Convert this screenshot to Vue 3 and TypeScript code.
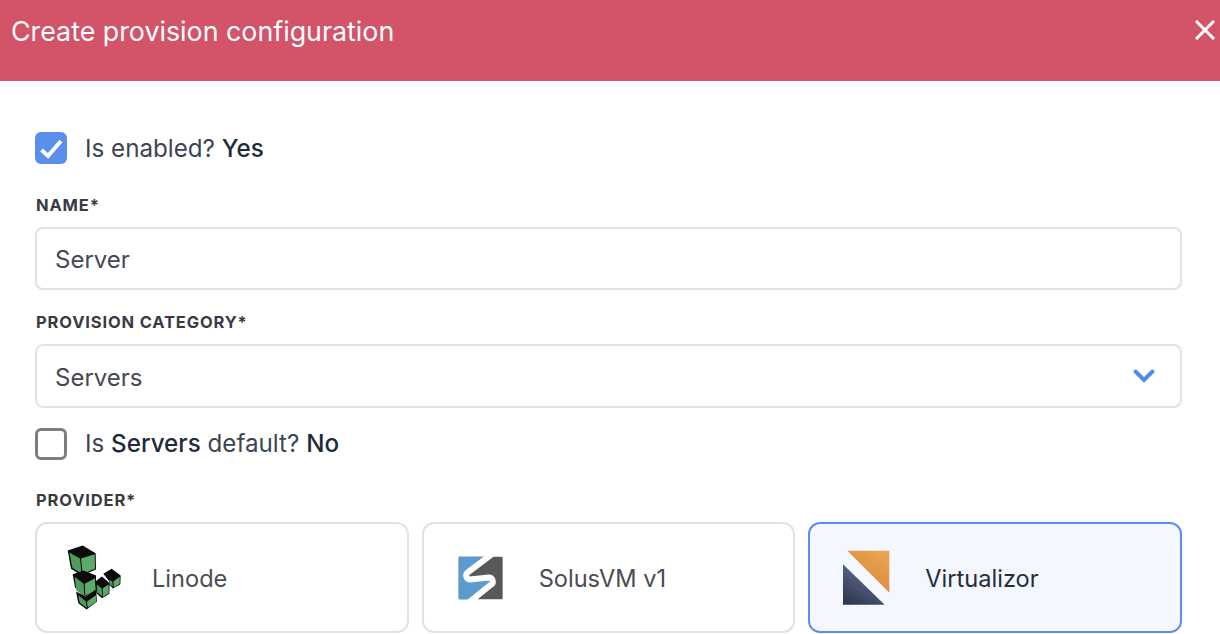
<script setup lang="ts">
import { ref } from 'vue'

const enabled = ref(true)
const isDefault = ref(false)
const name = ref('Server')
const provider = ref('virtualizor')

const providers = [
  { id: 'linode', label: 'Linode', viewBox: '90 82.5 210 210' },
  { id: 'solus', label: 'SolusVM v1', viewBox: '80 82.5 210 210' },
  { id: 'virtualizor', label: 'Virtualizor', viewBox: '100 82.5 210 210' },
]

// each cube: black silhouette, then the two green faces
const cubes = [
  { hull: '113,105 158,90 197,113 198,162 155,180 123,160', left: '118,111 150,129 155,175 127,157', right: '153,129 194,116 195,160 158,175' },
  { hull: '128,176 160,165 198,180 198,222 167,243 135,215', left: '134,184 161,205 163,243 139,224', right: '164,205 195,188 197,224 166,241' },
  { hull: '138,228 167,243 198,222 201,258 170,282 145,263', left: '145,239 168,258 170,277 149,262', right: '171,258 198,239 199,258 173,277' },
  { hull: '196,198 216,183 239,203 238,235 216,248 199,233', left: '200,207 215,218 217,243 202,231', right: '218,218 236,207 236,233 219,244' },
  { hull: '220,175 245,160 272,180 271,206 249,219 238,208 238,198', left: '238,193 247,198 249,214 240,207', right: '250,198 269,184 269,204 252,216' },
]
</script>

<template>
  <div class="modal">
    <header class="modal-header">
      <h1>Create provision configuration</h1>
      <button class="close" type="button" aria-label="Close">
        <svg width="20" height="20" viewBox="0 0 20 20">
          <path d="M2 2 18 18M18 2 2 18" stroke="#fff" stroke-width="3" stroke-linecap="square" />
        </svg>
      </button>
    </header>

    <form class="form" @submit.prevent>
      <label class="check check-first" @click.prevent="enabled = !enabled">
        <span class="box" :class="{ checked: enabled }">
          <svg v-if="enabled" width="32" height="32" viewBox="0 0 32 32">
            <path d="M6.5 18 13 24 26 9" fill="none" stroke="#fff" stroke-width="4" />
          </svg>
        </span>
        <span class="check-text">Is enabled? <b>{{ enabled ? 'Yes' : 'No' }}</b></span>
      </label>

      <label class="field-label label-name">NAME*</label>
      <input v-model="name" class="control text-input" type="text" />

      <label class="field-label label-category">PROVISION CATEGORY*</label>
      <div class="control select">
        <span class="select-value">Servers</span>
        <svg width="24" height="16" viewBox="0 0 24 16">
          <path d="M3.5 3.5 12 12 20.5 3.5" fill="none" stroke="#5189ee" stroke-width="4" stroke-linecap="round" />
        </svg>
      </div>

      <label class="check check-second" @click.prevent="isDefault = !isDefault">
        <span class="box" :class="{ checked: isDefault }" />
        <span>Is <b>Servers</b> default? <b>{{ isDefault ? 'Yes' : 'No' }}</b></span>
      </label>

      <label class="field-label label-provider">PROVIDER*</label>
      <div class="providers">
        <button
          v-for="item in providers"
          :key="item.id"
          class="provider"
          :class="{ active: provider === item.id }"
          type="button"
          @click="provider = item.id"
        >
          <svg class="logo" width="70" height="70" :viewBox="item.viewBox">
            <g v-if="item.id === 'linode'">
              <g v-for="(cube, i) in cubes" :key="i">
                <polygon :points="cube.hull" fill="#0a0a0a" />
                <polygon :points="cube.left" fill="#4f9a5c" />
                <polygon :points="cube.right" fill="#5cab68" />
              </g>
            </g>
            <g v-else-if="item.id === 'solus'">
              <rect x="115" y="124" width="132" height="127" rx="3" fill="#58585a" />
              <path
                d="M115 124H204L143 170A12 12 0 0 0 148 192L205 186A12 12 0 0 1 210 209L158 251H115Z"
                fill="#5b9bd1"
              />
              <path
                d="M216 115 143 170A12 12 0 0 0 148 192L205 186A12 12 0 0 1 210 209L147 260"
                fill="none"
                stroke="#fff"
                stroke-width="18"
              />
            </g>
            <g v-else>
              <defs>
                <linearGradient id="virt-orange" x1="1" y1="0" x2="0.4" y2="1">
                  <stop offset="0" stop-color="#eaa753" />
                  <stop offset="1" stop-color="#d8853c" />
                </linearGradient>
                <linearGradient id="virt-navy" x1="0" y1="1" x2="0.6" y2="0">
                  <stop offset="0" stop-color="#2c3249" />
                  <stop offset="1" stop-color="#5f7195" />
                </linearGradient>
              </defs>
              <polygon points="143,106 269,106 269,231" fill="url(#virt-orange)" />
              <polygon points="130,146 255,268 130,268" fill="url(#virt-navy)" />
            </g>
          </svg>
          <span>{{ item.label }}</span>
        </button>
      </div>
    </form>
  </div>
</template>

<style scoped>
.modal {
  width: 1220px;
  height: 634px;
  overflow: hidden;
  background: #fff;
  font-family: Inter, "Liberation Sans", sans-serif;
  color: #444a52;
}

.modal-header {
  display: flex;
  justify-content: space-between;
  height: 81px;
  padding: 14px 5px 0 11px;
  box-sizing: border-box;
  background: #d35369;
  color: #fff;
}

.modal-header h1 {
  margin: 0;
  font-size: 26.8px;
  line-height: 34px;
  font-weight: 400;
}

.close {
  width: 20px;
  height: 20px;
  margin-top: 6px;
  padding: 0;
  border: 0;
  background: none;
}

.form {
  display: flex;
  flex-direction: column;
  padding: 0 38px 0 35px;
}

.check {
  display: flex;
  align-items: center;
  gap: 18px;
  height: 32px;
  font-size: 24.2px;
  line-height: 32px;
  color: #3c4552;
}

.check b {
  font-weight: 500;
  color: #1f2a3a;
}

.check-first {
  margin-top: 51px;
}

.check-text {
  padding-top: 2px;
}

.check-second {
  margin-top: 20px;
}

.box {
  display: flex;
  align-items: center;
  justify-content: center;
  width: 32px;
  height: 32px;
  box-sizing: border-box;
  border: 3px solid #7c7d80;
  border-radius: 6px;
}

.box.checked {
  border: 0;
  background: #5a8ff0;
}

.field-label {
  padding-left: 1px;
  font-size: 16.5px;
  line-height: 20px;
  font-weight: 700;
  letter-spacing: 0.85px;
  color: #383c42;
}

.label-name {
  margin-top: 31px;
}

.label-category {
  margin-top: 22px;
}

.label-provider {
  margin-top: 30px;
}

.control {
  height: 64px;
  margin-top: 12px;
  padding: 0 18px;
  box-sizing: border-box;
  border: 2px solid #e2e2e2;
  border-radius: 8px;
  font-family: inherit;
  font-size: 24px;
  color: #444a52;
  outline: none;
}

.text-input {
  height: 63px;
  padding-top: 1px;
}

.select {
  display: flex;
  align-items: center;
  justify-content: space-between;
  padding-right: 24px;
}

.select-value {
  padding-top: 2px;
}

.providers {
  display: grid;
  grid-template-columns: repeat(3, 1fr);
  gap: 13px;
  margin-top: 12px;
}

.provider {
  display: flex;
  align-items: center;
  gap: 22px;
  height: 111px;
  padding: 0 0 0 23px;
  border: 2px solid #e2e2e2;
  border-radius: 12px;
  background: #fff;
  font-family: inherit;
  font-size: 23.6px;
  color: #4a4d52;
  text-align: left;
}

.provider span {
  padding-top: 2px;
}

.provider.active {
  border-color: #5b8fef;
  background: #f4f7fd;
  color: #222d3d;
}

.logo {
  flex: none;
}
</style>

<style>
html,
body {
  margin: 0;
  background: #fff;
}
</style>
